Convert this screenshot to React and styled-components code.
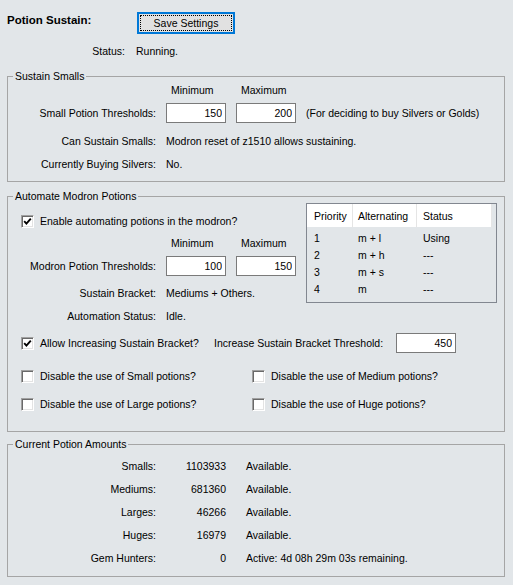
import { Fragment } from 'react';
import styled, { createGlobalStyle } from 'styled-components';

const GlobalStyle = createGlobalStyle`
  html, body {
    margin: 0;
    background: #e2e6e9;
  }
  body {
    font-family: "Liberation Sans", Arial, sans-serif;
    font-size: 10.5px;
    color: #000;
  }
`;

const Page = styled.div`
  width: 513px;
  min-height: 585px;
  box-sizing: border-box;
  padding: 12px 8px 0 7px;
  line-height: 14px;
`;

const Header = styled.div`
  display: flex;
  align-items: flex-start;
`;

const Title = styled.div`
  width: 130px;
  margin-top: 1px;
  font-size: 11.5px;
  font-weight: 700;
`;

const SaveButton = styled.button`
  width: 98px;
  height: 22px;
  padding: 0;
  border: 2px solid #0078d7;
  background: #e1e1e1;
  color: #000;
  font: inherit;
  outline: 1px dotted #000;
  outline-offset: -4px;
`;

const StatusRow = styled.div`
  display: grid;
  grid-template-columns: 118px auto;
  column-gap: 11px;
  margin-top: 10px;
`;

const Label = styled.div`
  text-align: right;
  white-space: nowrap;
`;

const Value = styled.div`
  white-space: nowrap;
`;

const Group = styled.fieldset`
  margin: ${({ $mt }) => $mt}px 0 0;
  padding: 0 0 ${({ $pb }) => $pb}px;
  min-width: 0;
  border: 1px solid #a5a5a5;
`;

const Caption = styled.legend`
  margin-left: 5px;
  padding: 0 2px;
  line-height: 12px;
`;

const FieldGrid = styled.div`
  display: grid;
  grid-template-columns: 148px 60px 60px ${({ $note }) => ($note ? '1fr' : '')};
  grid-template-rows: 14px 20px;
  column-gap: 10px;
  row-gap: 6px;
  align-items: center;
  margin-top: ${({ $mt }) => $mt}px;
`;

const ColHead = styled.div`
  padding-left: 5px;
  white-space: nowrap;
`;

const NumInput = styled.input`
  width: 60px;
  height: 20px;
  box-sizing: border-box;
  margin: 0 0 0 ${({ $ml }) => $ml || 0}px;
  padding: 0 3px 0 0;
  border: 1px solid #7a7a7a;
  background: #fff;
  color: #000;
  font: inherit;
  text-align: right;
  outline: none;
`;

const Note = styled.div`
  white-space: nowrap;
`;

const InfoRow = styled.div`
  display: grid;
  grid-template-columns: 148px 1fr;
  column-gap: 10px;
  margin-top: ${({ $mt }) => $mt}px;
`;

const TopArea = styled.div`
  display: flex;
  align-items: flex-start;
`;

const LeftCol = styled.div`
  width: 288px;
`;

const CheckRow = styled.div`
  display: flex;
  align-items: center;
  height: ${({ $h }) => $h || 14}px;
  padding-left: 13px;
  margin-top: ${({ $mt }) => $mt}px;
`;

const CheckLabel = styled.label`
  display: flex;
  align-items: center;
  gap: 6px;
  width: ${({ $w }) => ($w ? `${$w}px` : 'auto')};
  white-space: nowrap;
`;

const Box = styled.span`
  display: inline-flex;
  align-items: center;
  justify-content: center;
  width: 13px;
  height: 13px;
  box-sizing: border-box;
  background: #fff;
  border: 1px solid;
  border-color: #a0a0a0 #fff #fff #a0a0a0;
  box-shadow: inset 1px 1px 0 #696969, inset -1px -1px 0 #e3e3e3;
`;

const ThresholdLabel = styled.div`
  width: 172px;
  white-space: nowrap;
`;

const OptionGrid = styled.div`
  display: grid;
  grid-template-columns: 231px 1fr;
  grid-auto-rows: 14px;
  row-gap: 14px;
  padding-left: 13px;
  margin-top: 16px;
`;

const ListView = styled.div`
  width: 191px;
  height: 100px;
  box-sizing: border-box;
  margin: 1px 0 0 10px;
  border: 1px solid #828790;
`;

const ListRow = styled.div`
  display: grid;
  grid-template-columns: 46px 64px 75px 1fr;
  height: ${({ $head }) => ($head ? 23 : 17)}px;
  align-items: center;
  margin-top: ${({ $first }) => ($first ? 2 : 0)}px;
`;

const HeadCell = styled.div`
  align-self: stretch;
  display: flex;
  align-items: center;
  padding-left: ${({ $pl }) => $pl}px;
  background: #fff;
  border-right: 1px solid #e5e5e5;
  white-space: nowrap;
`;

const Cell = styled.div`
  padding-left: ${({ $pl }) => $pl}px;
  white-space: nowrap;
`;

const AmountGrid = styled.div`
  display: grid;
  grid-template-columns: 148px 60px 1fr;
  grid-auto-rows: 23px;
  column-gap: 10px;
  align-items: center;
  padding-top: 4px;
`;

const Amount = styled.div`
  text-align: right;
`;

const AmountStatus = styled.div`
  padding-left: 10px;
  white-space: nowrap;
`;

function CheckBox({ checked, children, width }) {
  return (
    <CheckLabel $w={width}>
      <Box>
        {checked && (
          <svg width="9" height="9" viewBox="0 0 9 9">
            <polyline points="1.2,4.2 3.4,6.6 7.8,1.6" fill="none" stroke="#000" strokeWidth="1.9" />
          </svg>
        )}
      </Box>
      {children}
    </CheckLabel>
  );
}

const priorities = [
  { p: '1', alt: 'm + l', status: 'Using' },
  { p: '2', alt: 'm + h', status: '---' },
  { p: '3', alt: 'm + s', status: '---' },
  { p: '4', alt: 'm', status: '---' },
];

const amounts = [
  { label: 'Smalls:', value: '1103933', status: 'Available.' },
  { label: 'Mediums:', value: '681360', status: 'Available.' },
  { label: 'Larges:', value: '46266', status: 'Available.' },
  { label: 'Huges:', value: '16979', status: 'Available.' },
  { label: 'Gem Hunters:', value: '0', status: 'Active: 4d 08h 29m 03s remaining.' },
];

export default function App() {
  return (
    <Page>
      <GlobalStyle />
      <Header>
        <Title>Potion Sustain:</Title>
        <SaveButton>Save Settings</SaveButton>
      </Header>
      <StatusRow>
        <Label>Status:</Label>
        <Value>Running.</Value>
      </StatusRow>

      <Group $mt={12} $pb={10}>
        <Caption>Sustain Smalls</Caption>
        <FieldGrid $mt={1} $note>
          <div />
          <ColHead>Minimum</ColHead>
          <ColHead>Maximum</ColHead>
          <div />
          <Label>Small Potion Thresholds:</Label>
          <NumInput defaultValue="150" />
          <NumInput defaultValue="200" />
          <Note>(For deciding to buy Silvers or Golds)</Note>
        </FieldGrid>
        <InfoRow $mt={11}>
          <Label>Can Sustain Smalls:</Label>
          <Value>Modron reset of z1510 allows sustaining.</Value>
        </InfoRow>
        <InfoRow $mt={9}>
          <Label>Currently Buying Silvers:</Label>
          <Value>No.</Value>
        </InfoRow>
      </Group>

      <Group $mt={8} $pb={20}>
        <Caption>Automate Modron Potions</Caption>
        <TopArea>
          <LeftCol>
            <CheckRow $mt={12}>
              <CheckBox checked>Enable automating potions in the modron?</CheckBox>
            </CheckRow>
            <FieldGrid $mt={8}>
              <div />
              <ColHead>Minimum</ColHead>
              <ColHead>Maximum</ColHead>
              <Label>Modron Potion Thresholds:</Label>
              <NumInput defaultValue="100" />
              <NumInput defaultValue="150" />
            </FieldGrid>
            <InfoRow $mt={10}>
              <Label>Sustain Bracket:</Label>
              <Value>Mediums + Others.</Value>
            </InfoRow>
            <InfoRow $mt={9}>
              <Label>Automation Status:</Label>
              <Value>Idle.</Value>
            </InfoRow>
          </LeftCol>
          <ListView>
            <ListRow $head>
              <HeadCell $pl={7}>Priority</HeadCell>
              <HeadCell $pl={5}>Alternating</HeadCell>
              <HeadCell $pl={6}>Status</HeadCell>
            </ListRow>
            {priorities.map((r, i) => (
              <ListRow key={r.p} $first={i === 0}>
                <Cell $pl={7}>{r.p}</Cell>
                <Cell $pl={5}>{r.alt}</Cell>
                <Cell $pl={6}>{r.status}</Cell>
              </ListRow>
            ))}
          </ListView>
        </TopArea>
        <CheckRow $mt={10} $h={20}>
          <CheckBox checked width={193}>Allow Increasing Sustain Bracket?</CheckBox>
          <ThresholdLabel>Increase Sustain Bracket Threshold:</ThresholdLabel>
          <NumInput defaultValue="450" $ml={10} />
        </CheckRow>
        <OptionGrid>
          <CheckBox>Disable the use of Small potions?</CheckBox>
          <CheckBox>Disable the use of Medium potions?</CheckBox>
          <CheckBox>Disable the use of Large potions?</CheckBox>
          <CheckBox>Disable the use of Huge potions?</CheckBox>
        </OptionGrid>
      </Group>

      <Group $mt={6} $pb={7}>
        <Caption>Current Potion Amounts</Caption>
        <AmountGrid>
          {amounts.map((a) => (
            <Fragment key={a.label}>
              <Label>{a.label}</Label>
              <Amount>{a.value}</Amount>
              <AmountStatus>{a.status}</AmountStatus>
            </Fragment>
          ))}
        </AmountGrid>
      </Group>
    </Page>
  );
}
